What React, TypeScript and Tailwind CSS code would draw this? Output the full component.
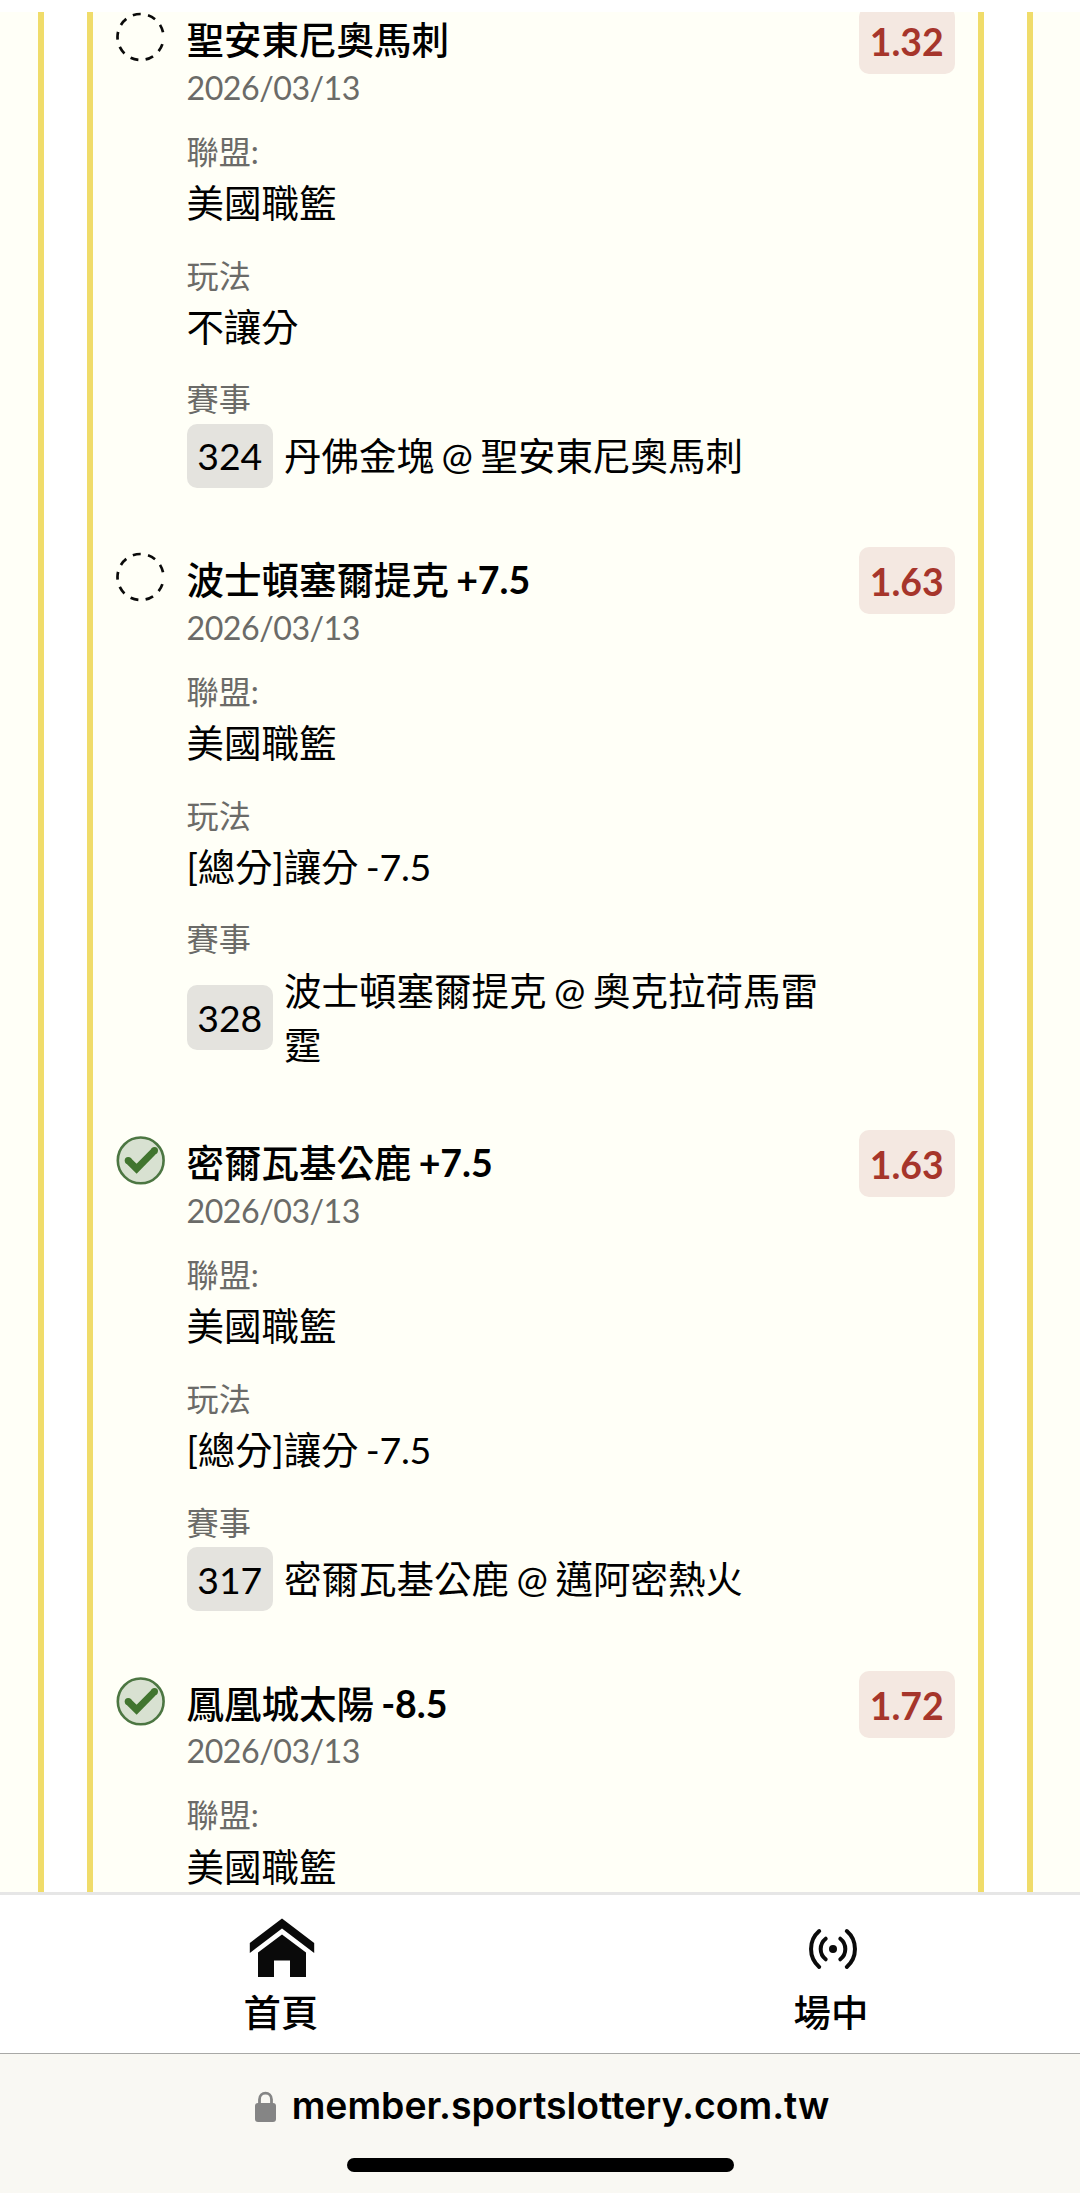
import React from "react";

type Status = "pending" | "won";

interface Bet {
  status: Status;
  team: string;
  line?: string;
  odds: string;
  date: string;
  league: string;
  play?: string;
  code?: string;
  match?: string;
}

const bets: Bet[] = [
  { status: "pending", team: "聖安東尼奧馬刺", odds: "1.32", date: "2026/03/13", league: "美國職籃", play: "不讓分", code: "324", match: "丹佛金塊 @ 聖安東尼奧馬刺" },
  { status: "pending", team: "波士頓塞爾提克", line: "+7.5", odds: "1.63", date: "2026/03/13", league: "美國職籃", play: "[總分]讓分 -7.5", code: "328", match: "波士頓塞爾提克 @ 奧克拉荷馬雷霆" },
  { status: "won", team: "密爾瓦基公鹿", line: "+7.5", odds: "1.63", date: "2026/03/13", league: "美國職籃", play: "[總分]讓分 -7.5", code: "317", match: "密爾瓦基公鹿 @ 邁阿密熱火" },
  { status: "won", team: "鳳凰城太陽", line: "-8.5", odds: "1.72", date: "2026/03/13", league: "美國職籃" },
];

function StatusIcon({ status }: { status: Status }) {
  if (status === "pending") {
    return (
      <svg viewBox="0 0 50 50" className="h-[50px] w-[50px]" fill="none">
        <circle cx="24.5" cy="25" r="23" stroke="#0a0a0a" strokeWidth="2.7" strokeDasharray="8 7.450" strokeDashoffset="-7.2" />
      </svg>
    );
  }
  return (
    <svg viewBox="0 0 50 50" className="h-[50px] w-[50px]" fill="none">
      <circle cx="24.7" cy="25.4" r="22.900" fill="#d8e1d1" stroke="#4c7642" strokeWidth="2.600" />
      <path d="M12 25.200L20.600 33.800L38.700 15.400" stroke="#41752f" strokeWidth="7" />
      <circle cx="12.200" cy="25.400" r="3.500" fill="#41752f" />
      <circle cx="38.500" cy="15.600" r="3.500" fill="#41752f" />
    </svg>
  );
}

function Field({ label, children }: { label: string; children: React.ReactNode }) {
  return (
    <div className="mb-[21.5px] last:mb-0">
      <div className="h-[48.4px] text-[32.2px] leading-[48.4px] text-[#6b6b68]">{label}</div>
      {children}
    </div>
  );
}

function BetRow({ bet }: { bet: Bet }) {
  return (
    <div className="mb-[64.2px] flex items-start pl-[23px] pr-[23.5px]">
      <div className="w-[70.5px] shrink-0">
        <StatusIcon status={bet.status} />
      </div>
      <div className="min-w-0 grow pt-[1px] [word-spacing:-2px]">
        <div className="h-[53.7px] whitespace-nowrap text-[37.5px] font-bold leading-[53.7px] text-black">
          <span className="font-medium">{bet.team}</span>
          {bet.line && <span> {bet.line}</span>}
        </div>
        <div className="mb-[19px] h-[42px] text-[32.2px] leading-[41.5px] tracking-[-0.5px] text-[#6b6b68]">{bet.date}</div>
        <Field label="聯盟:">
          <div className="text-[37.5px] leading-[54px]">{bet.league}</div>
        </Field>
        {bet.play && (
          <Field label="玩法">
            <div className="text-[37.5px] leading-[53.7px] tracking-[-0.2px]">{bet.play}</div>
          </Field>
        )}
        {bet.match && (
          <Field label="賽事">
            <div className="flex items-center gap-[11px]">
              <div className="flex h-[64.5px] w-[86.5px] shrink-0 items-center justify-center rounded-[10px] bg-[#e4e3de] pt-[1px] text-[37.4px]">
                {bet.code}
              </div>
              <div className="text-[37.5px] leading-[53.7px]">{bet.match}</div>
            </div>
          </Field>
        )}
      </div>
      <div className="-mt-[5px] ml-[32px] flex h-[67px] w-[95.5px] shrink-0 items-center justify-center rounded-[10px] bg-[#f4e8e1] pt-[3px] text-[37.4px] font-bold text-[#a6352b]">
        {bet.odds}
      </div>
    </div>
  );
}

function HomeIcon() {
  return (
    <svg viewBox="0 0 66 60" className="h-[60px] w-[66px]" fill="#0a0a0a">
      <path d="M33 .5L65.200 25V35L33 10.500L.8 35V25Z" />
      <path d="M33 16.500L57 34.500V59H41V42.500H25V59H9V34.500Z" />
    </svg>
  );
}

function LiveIcon() {
  return (
    <svg viewBox="0 0 50 42" className="h-[42px] w-[50px]" fill="none" stroke="#0a0a0a" strokeWidth="4" strokeLinecap="round">
      <circle cx="25" cy="21" r="4" fill="#0a0a0a" stroke="none" />
      <path d="M17.700 10.700A13.100 13.100 0 0 0 17.700 31.300M32.300 10.700A13.100 13.100 0 0 1 32.300 31.300" />
      <path d="M11.200 3.100A23.700 23.700 0 0 0 11.200 38.900M38.800 3.100A23.700 23.700 0 0 1 38.800 38.900" />
    </svg>
  );
}

export default function App() {
  return (
    <div className="flex h-[2193px] w-[1080px] flex-col overflow-hidden bg-white font-['Lato','Noto_Sans_CJK_TC',sans-serif] text-black">
      <div className="h-[12px] shrink-0" />
      <main className="flex h-[1880px] shrink-0 overflow-hidden bg-[#fffff7]">
        <div className="w-[44px] shrink-0 border-r-[6px] border-[#f0dc6a]" />
        <div className="w-[43px] shrink-0 bg-white" />
        <div className="w-[897px] shrink-0 border-x-[6px] border-[#f0dc6a]">
          {bets.map((bet) => (
            <BetRow key={bet.team} bet={bet} />
          ))}
        </div>
        <div className="w-[43px] shrink-0 bg-white" />
        <div className="grow border-l-[6px] border-[#f0dc6a]" />
      </main>
      <nav className="grid h-[161px] shrink-0 grid-cols-[550px_550px] border-t-[3px] border-[#e6e6e6] pl-[6px] text-[37.4px] font-medium">
        <div className="flex flex-col items-center pt-[23px]">
          <div className="flex h-[60px] items-center pl-[2px]"><HomeIcon /></div>
          <div className="mt-[8px] leading-[54px]">首頁</div>
        </div>
        <div className="flex flex-col items-center pt-[23px]">
          <div className="flex h-[60px] items-center pl-[4px] pt-[1px]"><LiveIcon /></div>
          <div className="mt-[8px] leading-[54px]">場中</div>
        </div>
      </nav>
      <footer className="flex grow flex-col items-center border-t border-[#a9a9a7] bg-[#f9f8f3]">
        <div className="mt-[30px] flex h-[44px] items-center pl-[4px]">
          <svg viewBox="0 0 21 31" className="mr-[16px] h-[31px] w-[21px]" fill="none">
            <rect x="0" y="12" width="21" height="19" rx="3" fill="#858585" />
            <path d="M4.500 13V8.500C4.500 0 16.500 0 16.500 8.500V13" stroke="#858585" strokeWidth="2.800" />
          </svg>
          <span className="whitespace-nowrap font-['Inter',sans-serif] text-[37.4px] font-semibold leading-[44px] text-black">member.sportslottery.com.tw</span>
        </div>
        <div className="mt-[30px] h-[14px] w-[387px] rounded-full bg-black" />
      </footer>
    </div>
  );
}
